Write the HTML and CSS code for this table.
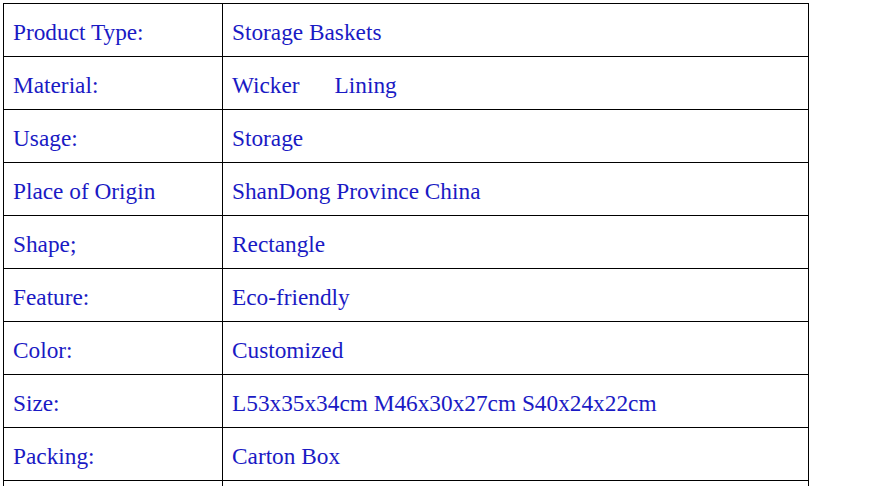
FILE: index.html
```html
<!DOCTYPE html>
<html>
<head>
<meta charset="utf-8">
<link rel="stylesheet" href="styles.css">
</head>
<body>
<table class="spec">
  <tr><td class="k">Product Type:</td><td class="v">Storage Baskets</td></tr>
  <tr><td class="k">Material:</td><td class="v">Wicker&nbsp;&nbsp;&nbsp;&nbsp;&nbsp;&nbsp;Lining</td></tr>
  <tr><td class="k">Usage:</td><td class="v">Storage</td></tr>
  <tr><td class="k">Place of Origin</td><td class="v">ShanDong Province China</td></tr>
  <tr><td class="k">Shape;</td><td class="v">Rectangle</td></tr>
  <tr><td class="k">Feature:</td><td class="v">Eco-friendly</td></tr>
  <tr><td class="k">Color:</td><td class="v">Customized</td></tr>
  <tr><td class="k">Size:</td><td class="v">L53x35x34cm M46x30x27cm S40x24x22cm</td></tr>
  <tr><td class="k">Packing:</td><td class="v">Carton Box</td></tr>
  <tr><td class="k">&nbsp;</td><td class="v">&nbsp;</td></tr>
</table>
</body>
</html>
```

FILE: styles.css
```css
html, body {
  margin: 0;
  padding: 0;
  background: #ffffff;
}
body {
  padding: 3px 0 0 3px;
  font-family: "Liberation Serif", "Times New Roman", serif;
  font-size: 23.3px;
  color: #1a1ac4;
}
.spec {
  border-collapse: collapse;
  width: 806px;
  table-layout: fixed;
}
.spec td {
  border: 1px solid #000;
  height: 53px;
  padding: 3px 9px 0;
  vertical-align: middle;
  white-space: nowrap;
  box-sizing: border-box;
  line-height: 26px;
}
.spec td.k {
  width: 219px;
}
```
